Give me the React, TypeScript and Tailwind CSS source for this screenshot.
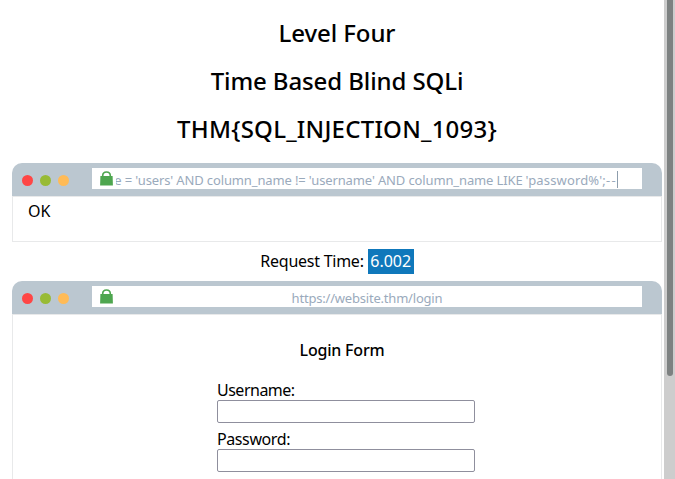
import type { ReactNode } from 'react';

function Lock() {
  return (
    <svg viewBox="0 0 13 15" className="h-[15px] w-[13px] shrink-0" aria-hidden="true">
      <path d="M2.700 6V4.800C2.700 2.300 4.300 1 6.500 1s3.800 1.300 3.800 3.800V6" fill="none" stroke="#4ea64f" strokeWidth="1.600" />
      <path d="M.4 5h12.200l.3 9.500H.1z" fill="#4ea64f" />
    </svg>
  );
}

function Browser({ address, children }: { address: ReactNode; children: ReactNode }) {
  return (
    <section className="mx-3 w-[650px]">
      <div className="flex h-[33px] items-start rounded-t-[10px] bg-[#bbc7d0] pt-[5px] pl-[10px]">
        <div className="mt-[7px] flex w-[70px] gap-[7px]">
          <span className="size-[11px] rounded-full bg-[#ff4645]" />
          <span className="size-[11px] rounded-full bg-[#98bb35]" />
          <span className="size-[11px] rounded-full bg-[#ffbb57]" />
        </div>
        <div className="flex h-[21px] w-[550px] bg-white pt-[3px] pl-2 text-[13px] leading-[18px] text-[#9aaabc]">
          <Lock />
          {address}
        </div>
      </div>
      {children}
    </section>
  );
}

function Field({ label, spacing }: { label: string; spacing: string }) {
  return (
    <label className="mb-[7px] block h-[42px]">
      <span className={`block h-[19px] text-base leading-[19px] whitespace-nowrap ${spacing}`}>{label}</span>
      <input className="block h-[23px] w-[258px] rounded-[2px] border border-[#8f8f9d] bg-white px-1 outline-none" />
    </label>
  );
}

export default function App() {
  return (
    <main className="flex h-[479px] w-[675px] overflow-hidden bg-white font-['Noto_Sans',sans-serif] text-black">
      <div className="w-[664px] shrink-0">
        <header className="flex h-[163px] w-[674px] flex-col pt-[9px] text-center text-2xl leading-[48px] font-medium">
          <h1 className="tracking-[-0.1px]">Level Four</h1>
          <h1 className="tracking-[-0.1px]">Time Based Blind SQLi</h1>
          <h1 className="tracking-[0.23px]">THM&#123;SQL_INJECTION_1093&#125;</h1>
        </header>
        <Browser
          address={
            <div className="ml-[3px] flex w-[502px] justify-end overflow-hidden whitespace-nowrap">
              <span className="tracking-[-0.13px]">e = 'users' AND column_name != 'username' AND column_name LIKE </span>
              <span className="ml-[3px] tracking-[0.15px]">'password%';</span>
              <span className="tracking-[1.3px]">--</span>
              <span className="h-[17px] w-px shrink-0 bg-[#8d9dac]" />
            </div>
          }
        >
          <div className="h-[46px] border border-[#e8e9ea] pt-[2px] pl-[15px] text-base leading-6">OK</div>
        </Browser>
        <div className="flex h-[39px] items-center justify-center pl-[10px] text-base">
          <span className="-mt-[2px] mr-[4px] tracking-[-0.25px]">Request Time:</span>
          <span className="h-[25px] w-[46px] bg-[#0f78bb] text-center leading-[25px] text-white">6.002</span>
        </div>
        <Browser
          address={
            <div className="w-[508px] text-center">
              <span className="tracking-[-0.2px]">https://website.thm/login</span>
            </div>
          }
        >
          <div className="h-[180px] border border-[#e8e9ea] pt-[23px]">
            <h2 className="mb-[19px] h-6 pl-[10px] text-center text-base leading-6 font-medium tracking-[-0.2px]">Login Form</h2>
            <form className="ml-[204px] w-[258px]">
              <Field label="Username:" spacing="tracking-[-0.5px]" />
              <Field label="Password:" spacing="tracking-[-0.4px]" />
            </form>
          </div>
        </Browser>
      </div>
      <aside className="flex h-[479px] w-[11px] justify-center bg-[#cdcdcd]">
        <div className="h-[376px] w-[6px] rounded-b-[3px] bg-[#7d8181]" />
      </aside>
    </main>
  );
}
